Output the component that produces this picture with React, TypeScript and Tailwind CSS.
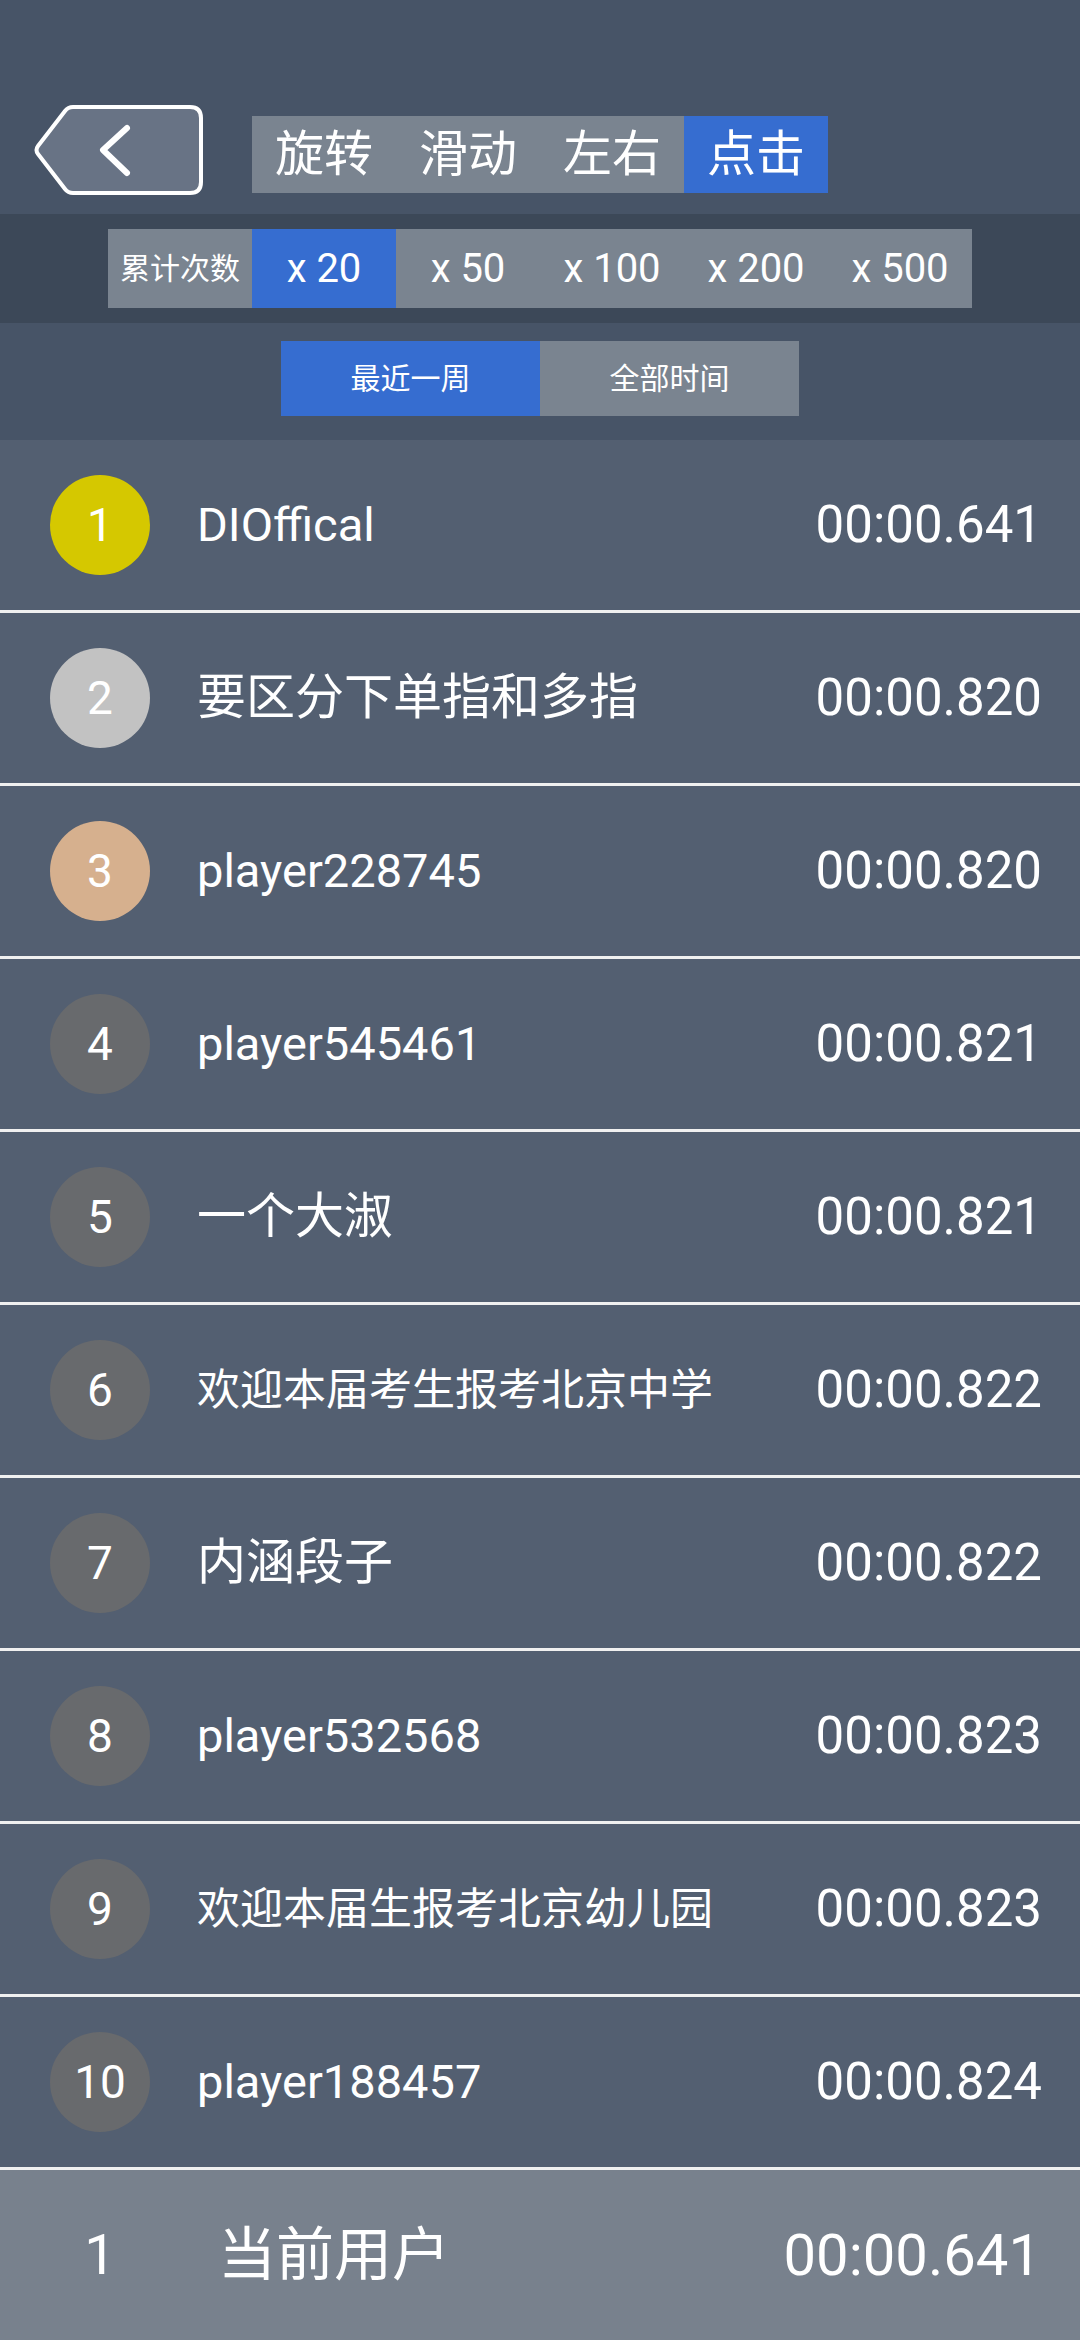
import React from "react";

const tabs = ["旋转", "滑动", "左右", "点击"];
const counts = ["x 20", "x 50", "x 100", "x 200", "x 500"];

const rows = [
  { rank: 1, name: "DIOffical", time: "00:00.641" },
  { rank: 2, name: "要区分下单指和多指", time: "00:00.820" },
  { rank: 3, name: "player228745", time: "00:00.820" },
  { rank: 4, name: "player545461", time: "00:00.821" },
  { rank: 5, name: "一个大淑", time: "00:00.821" },
  { rank: 6, name: "欢迎本届考生报考北京中学", time: "00:00.822", small: true },
  { rank: 7, name: "内涵段子", time: "00:00.822" },
  { rank: 8, name: "player532568", time: "00:00.823" },
  { rank: 9, name: "欢迎本届生报考北京幼儿园", time: "00:00.823", small: true },
  { rank: 10, name: "player188457", time: "00:00.824" },
];

const font = { fontFamily: "Roboto, 'Noto Sans CJK SC', sans-serif" };

function badgeColor(rank: number) {
  if (rank === 1) return "bg-[#d5c800]";
  if (rank === 2) return "bg-[#c2c2c2]";
  if (rank === 3) return "bg-[#d6b08e]";
  return "bg-[#686a6d]";
}

function nameSize(name: string, small?: boolean) {
  if (small) return "text-[43px]";
  // chinese names render a touch larger than latin ones
  return /^[a-zA-Z0-9]+$/.test(name) ? "text-[47px]" : "text-[49px]";
}

function BackButton() {
  return (
    <svg width="172" height="92" viewBox="0 0 172 92" className="block">
      <path
        d="M40 3 L157 3 Q168 3 168 14 L168 78 Q168 89 157 89 L40 89 Q35 89 32 85 L5 50 Q2 46 5 42 L32 7 Q35 3 40 3 Z"
        fill="#687385"
        stroke="#ffffff"
        strokeWidth="4"
      />
      <path
        d="M94 24 L70 46 L94 69"
        fill="none"
        stroke="#ffffff"
        strokeWidth="6"
        strokeLinecap="round"
        strokeLinejoin="round"
      />
    </svg>
  );
}

export default function App() {
  return (
    <div className="flex h-[2340px] w-[1080px] flex-col bg-[#475467] text-white" style={font}>
      {/* top bar */}
      <div className="flex h-[214px] shrink-0 items-start pl-[33px] pt-[104px]">
        <BackButton />
        <div className="ml-[47px] mt-[12px] flex h-[77px]">
          {tabs.map((t, i) => (
            <div
              key={t}
              className={`flex w-[144px] items-center justify-center text-[49px] ${
                i === 3 ? "bg-[#366dd0]" : "bg-[#7a8490]"
              }`}
            >
              {t}
            </div>
          ))}
        </div>
      </div>

      {/* count selector */}
      <div className="flex h-[109px] shrink-0 bg-[#3c4858] pl-[108px] pt-[15px]">
        <div className="flex h-[79px]">
          <div className="flex w-[144px] items-center justify-center bg-[#7a8490] text-[30px]">
            累计次数
          </div>
          {counts.map((c, i) => (
            <div
              key={c}
              className={`flex w-[144px] items-center justify-center text-[40px] ${
                i === 0 ? "bg-[#366dd0]" : "bg-[#7a8490]"
              }`}
            >
              {c}
            </div>
          ))}
        </div>
      </div>

      {/* time range */}
      <div className="flex h-[117px] shrink-0 pl-[281px] pt-[18px]">
        <div className="flex h-[75px]">
          <div className="flex w-[259px] items-center justify-center bg-[#366dd0] text-[30px]">
            最近一周
          </div>
          <div className="flex w-[259px] items-center justify-center bg-[#7a8490] text-[30px]">
            全部时间
          </div>
        </div>
      </div>

      {/* ranking list */}
      <div className="flex flex-col">
        {rows.map((r) => (
          <div
            key={r.rank}
            className="flex h-[173px] items-center border-b-[3px] border-[#f0f0f0] bg-[#535f71] pl-[50px] pr-[38px]"
          >
            <div
              className={`flex h-[100px] w-[100px] shrink-0 items-center justify-center rounded-full text-[46px] ${badgeColor(
                r.rank
              )}`}
            >
              {r.rank}
            </div>
            <div className={`ml-[47px] flex-1 ${nameSize(r.name, r.small)}`}>{r.name}</div>
            <div className="text-[51px]">{r.time}</div>
          </div>
        ))}
      </div>

      {/* current user */}
      <div className="flex flex-1 items-center bg-[#78818d] pl-[50px] pr-[39px]">
        <div className="flex w-[100px] justify-center text-[56px]">1</div>
        <div className="ml-[68px] flex-1 text-[58px]">当前用户</div>
        <div className="text-[58px]">00:00.641</div>
      </div>
    </div>
  );
}
